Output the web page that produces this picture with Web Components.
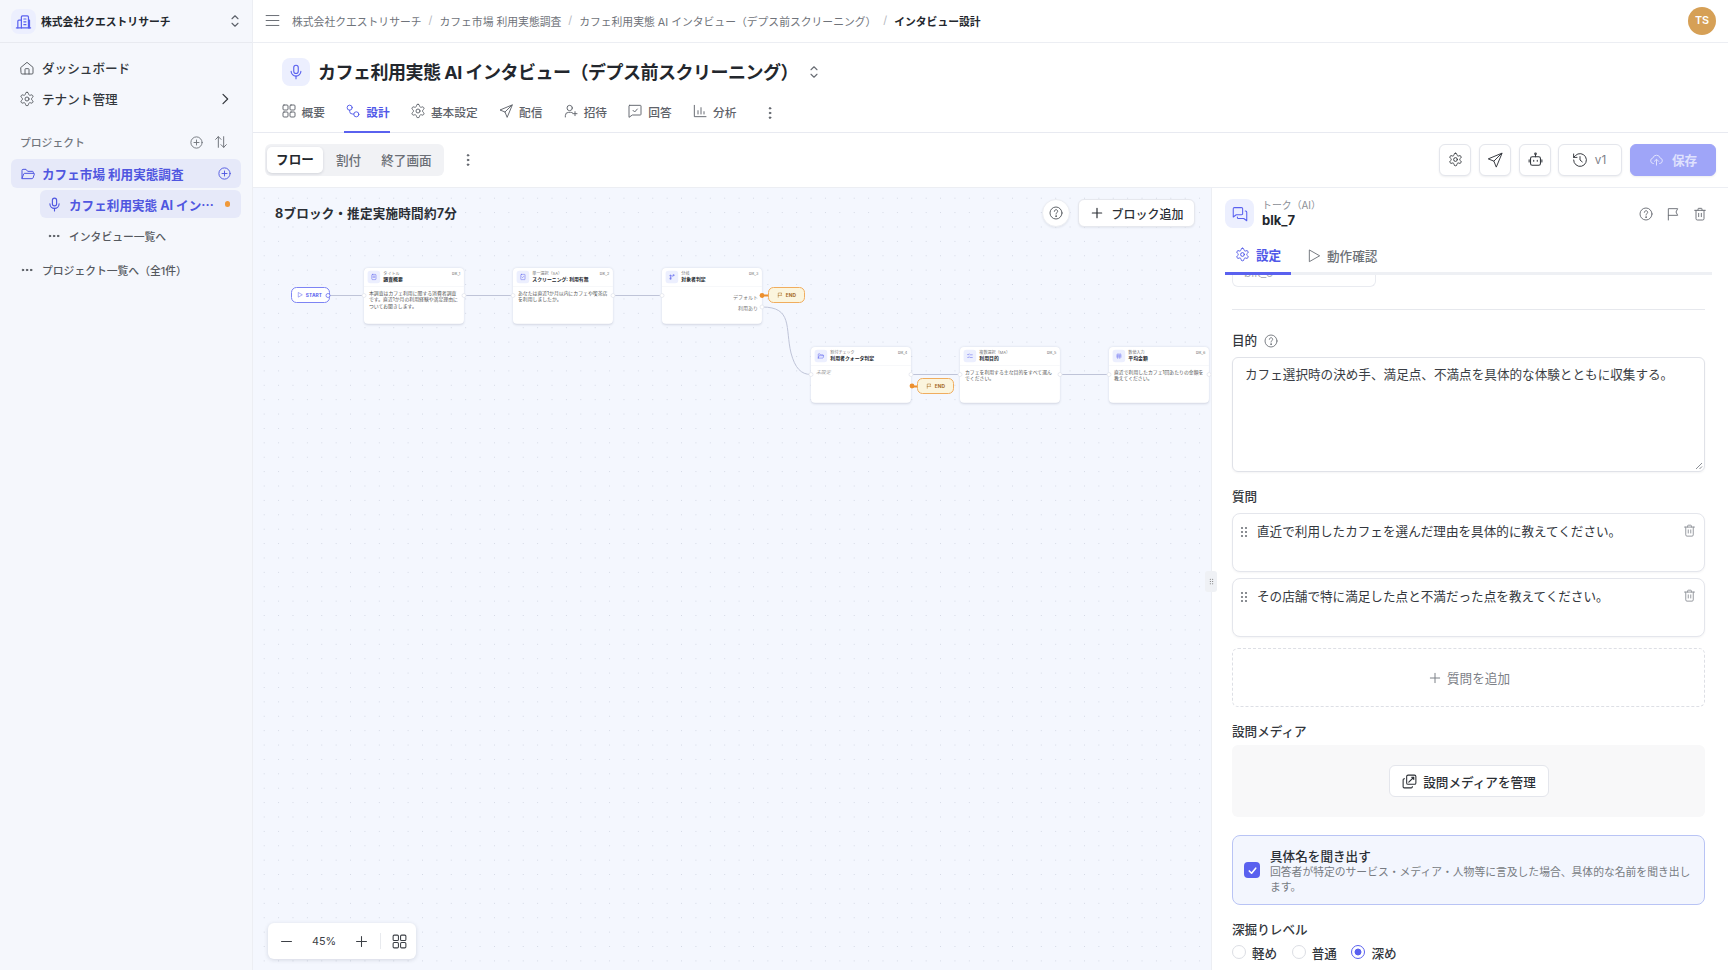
<!DOCTYPE html>
<html lang="ja">
<head>
<meta charset="utf-8">
<title>インタビュー設計</title>
<style>
  html, body { margin: 0; height: 100%; }
  body {
    font-family: Inter, "Noto Sans CJK JP", sans-serif;
    color: #1f2329;
    overflow: hidden;
    background: #fff;
  }
</style>
</head>
<body>
<app-root></app-root>
<script>
const ICONS = {
  home: '<path d="M3 11 12 3.500 21 11v8.500a1.500 1.500 0 0 1-1.500 1.500h-15A1.500 1.500 0 0 1 3 19.500z"/><path d="M9 21v-7a1 1 0 0 1 1-1h4a1 1 0 0 1 1 1v7"/>',
  gear: '<path d="M12.22 2h-.44a2 2 0 0 0-2 2v.18a2 2 0 0 1-1 1.73l-.43.25a2 2 0 0 1-2 0l-.15-.08a2 2 0 0 0-2.73.73l-.22.38a2 2 0 0 0 .73 2.73l.15.1a2 2 0 0 1 1 1.72v.51a2 2 0 0 1-1 1.74l-.15.09a2 2 0 0 0-.73 2.73l.22.38a2 2 0 0 0 2.73.73l.15-.08a2 2 0 0 1 2 0l.43.25a2 2 0 0 1 1 1.73V20a2 2 0 0 0 2 2h.44a2 2 0 0 0 2-2v-.18a2 2 0 0 1 1-1.73l.43-.25a2 2 0 0 1 2 0l.15.08a2 2 0 0 0 2.73-.73l.22-.39a2 2 0 0 0-.73-2.73l-.15-.08a2 2 0 0 1-1-1.74v-.5a2 2 0 0 1 1-1.74l.15-.09a2 2 0 0 0 .73-2.73l-.22-.38a2 2 0 0 0-2.73-.73l-.15.08a2 2 0 0 1-2 0l-.43-.25a2 2 0 0 1-1-1.73V4a2 2 0 0 0-2-2z"/><circle cx="12" cy="12" r="3"/>',
  mic: '<rect x="9" y="3" width="6" height="11" rx="3"/><path d="M5.500 11a6.500 6.500 0 0 0 13 0"/><path d="M12 17.500V21"/>',
  building: '<path d="M9 21V5.500A1.500 1.500 0 0 1 10.500 4h7A1.500 1.500 0 0 1 19 5.500V21"/><path d="M9 10H5.500A1.500 1.500 0 0 0 4 11.500V21"/><path d="M19 10h1.500v11"/><path d="M2 21h20"/><path d="M12.500 8.500h3M12.500 12.500h3M12.500 16.500h3"/>',
  updown: '<path d="m8 9 4-4 4 4"/><path d="m8 15 4 4 4-4"/>',
  right: '<path d="m9 5 7 7-7 7"/>',
  menu: '<path d="M3 5h18M3 12h18M3 19h18"/>',
  pluscircle: '<circle cx="12" cy="12" r="9"/><path d="M12 8v8M8 12h8"/>',
  sort: '<path d="M8 20V4M4 8l4-4 4 4"/><path d="M16 4v16M12 16l4 4 4-4"/>',
  folder: '<path d="M3 18V6.500A1.500 1.500 0 0 1 4.500 5H9l2.500 3h7A1.500 1.500 0 0 1 20 9.500V11"/><path d="M3 18.500 5.500 12a1.500 1.500 0 0 1 1.400-1H20.500a1 1 0 0 1 1 1.300L19.500 18a1.500 1.500 0 0 1-1.400 1H3.500z"/>',
  dots: '<circle cx="5" cy="12" r="1.300" fill="currentColor"/><circle cx="12" cy="12" r="1.300" fill="currentColor"/><circle cx="19" cy="12" r="1.300" fill="currentColor"/>',
  kebab: '<circle cx="12" cy="5" r="1.200" fill="currentColor"/><circle cx="12" cy="12" r="1.200" fill="currentColor"/><circle cx="12" cy="19" r="1.200" fill="currentColor"/>',
  grid: '<rect x="3" y="3" width="7.500" height="7.500" rx="1.500"/><rect x="13.500" y="3" width="7.500" height="7.500" rx="1.500"/><rect x="3" y="13.500" width="7.500" height="7.500" rx="1.500"/><rect x="13.500" y="13.500" width="7.500" height="7.500" rx="1.500"/>',
  route: '<circle cx="7" cy="7" r="3.800"/><circle cx="17" cy="17" r="3.800"/><path d="M7 10.800v1.700a4 4 0 0 0 4 4h2.200"/>',
  send: '<path d="M21 3 3 10.500l7.500 3 3 7.500z"/><path d="m21 3-10.500 10.500"/>',
  userplus: '<circle cx="10" cy="7.500" r="4"/><path d="M3.500 21v-2a5 5 0 0 1 5-5h3a5 5 0 0 1 3 1"/><path d="M18 13v6M15 16h6"/>',
  msgcheck: '<path d="M4 3.500h16a1 1 0 0 1 1 1v12.500a1 1 0 0 1-1 1H8l-5 3.500V4.500a1 1 0 0 1 1-1z"/><path d="m9 11 2.500 2.500L15.500 9"/>',
  chart: '<path d="M3.500 3.500V20.500H21"/><path d="M9 16.500v-5M13.500 16.500V7M18 16.500v-3.500"/>',
  robot: '<rect x="5" y="8" width="14" height="12" rx="2.500"/><path d="M12 8V5"/><circle cx="12" cy="3.800" r="1.100"/><path d="M9.500 13v1.500M14.500 13v1.500"/><path d="M3 12.500v3M21 12.500v3"/>',
  history: '<path d="M3.500 12a8.500 8.500 0 1 0 2.500-6L3.500 8.500"/><path d="M3.500 4v4.500H8"/><path d="M12 7.500V12l3 2.500"/>',
  cloud: '<path d="M7 18.500a4.500 4.500 0 0 1-.8-8.900 6 6 0 0 1 11.600 0 4.500 4.500 0 0 1-.8 8.900"/><path d="M12 21v-9M8.500 15l3.500-3.500 3.500 3.500"/>',
  help: '<circle cx="12" cy="12" r="9"/><path d="M9.500 9.500a2.500 2.500 0 1 1 3.800 2.100c-.8.500-1.300 1-1.300 2"/><circle cx="12" cy="16.700" r=".6" fill="currentColor"/>',
  plus: '<path d="M12 5v14M5 12h14"/>',
  minus: '<path d="M5 12h14"/>',
  chat: '<path d="M3 5a1.500 1.500 0 0 1 1.500-1.500H14A1.500 1.500 0 0 1 15.500 5v6.500A1.500 1.500 0 0 1 14 13H7l-4 3z"/><path d="M19 8h.500A1.500 1.500 0 0 1 21 9.500V21l-4-3h-7a1.500 1.500 0 0 1-1.500-1.500V16"/>',
  flag: '<path d="M5 21V4h14l-2.500 5L19 14H5"/>',
  trash: '<path d="M4 6.500h16"/><path d="M9 6.500V4.500a1 1 0 0 1 1-1h4a1 1 0 0 1 1 1v2"/><path d="M6 6.500V19a2 2 0 0 0 2 2h8a2 2 0 0 0 2-2V6.500"/><path d="M10 11v5M14 11v5"/>',
  play: '<path d="M5 3.500v17l15-8.500z"/>',
  drag: '<circle cx="9" cy="6" r="1.600" fill="currentColor"/><circle cx="15" cy="6" r="1.600" fill="currentColor"/><circle cx="9" cy="12" r="1.600" fill="currentColor"/><circle cx="15" cy="12" r="1.600" fill="currentColor"/><circle cx="9" cy="18" r="1.600" fill="currentColor"/><circle cx="15" cy="18" r="1.600" fill="currentColor"/>',
  media: '<rect x="8" y="3" width="13" height="13" rx="2"/><path d="M5 8H4.500A1.500 1.500 0 0 0 3 9.500v10A1.500 1.500 0 0 0 4.500 21h10a1.500 1.500 0 0 0 1.500-1.500V19"/><path d="m11 13 7-7M15 6h3v3"/>',
  doc: '<rect x="5" y="3" width="14" height="18" rx="3"/><path d="M9 9h6M9 13h6"/>',
  check: '<rect x="5" y="3" width="14" height="18" rx="2"/><path d="m9 12 2 2 4-4"/>',
  branch: '<circle cx="7" cy="18" r="2"/><circle cx="7" cy="7" r="2"/><circle cx="17" cy="6" r="2"/><path d="M7 9v7M7 15c0-4 8-3 9-7"/>',
  list: '<path d="m4 7 2 2 3-4M4 16l2 2 3-4"/><path d="M12 8h8M12 17h8"/>',
  hash: '<path d="M9 4 8 20M16 4l-1 16M4 9h16M4 15h16"/>'
};

class UiIcon extends HTMLElement {
  connectedCallback() {
    const size = this.getAttribute('size') || 14;
    const sw = this.getAttribute('sw') || 1.7;
    this.attachShadow({ mode: 'open' }).innerHTML = `
      <style>
        :host { display: inline-flex; flex: none; width: ${size}px; height: ${size}px; }
        svg { width: 100%; height: 100%; display: block; }
      </style>
      <svg viewBox="0 0 24 24" fill="none" stroke="currentColor" stroke-width="${sw}" stroke-linecap="round" stroke-linejoin="round">${ICONS[this.getAttribute('name')] || ''}</svg>`;
  }
}
customElements.define('ui-icon', UiIcon);

// 四角い薄紫の背景つきアイコン
class IconTile extends HTMLElement {
  connectedCallback() {
    const size = +this.getAttribute('size') || 28;
    const icon = this.getAttribute('icon');
    const isize = this.getAttribute('isize') || 16;
    this.attachShadow({ mode: 'open' }).innerHTML = `
      <style>
        :host {
          display: inline-flex; flex: none; align-items: center; justify-content: center;
          width: ${size}px; height: ${size}px; border-radius: ${this.getAttribute('radius') || 8}px;
          background: #eceffe; color: #5a61ef;
        }
      </style>
      <ui-icon name="${icon}" size="${isize}" sw="${this.getAttribute('sw') || 1.7}"></ui-icon>`;
  }
}
customElements.define('icon-tile', IconTile);

class AppSidebar extends HTMLElement {
  connectedCallback() {
    this.attachShadow({ mode: 'open' }).innerHTML = `
      <style>
        :host {
          display: flex; flex-direction: column; flex: none; box-sizing: border-box;
          width: 253px; height: 970px; background: #f5f7fc; border-right: 1px solid #eceef3;
          font-size: 12.600px; color: #33373d;
        }
        .brand {
          display: flex; align-items: center; gap: 5px; height: 43px; box-sizing: border-box; padding: 0 8px 0 11px;
          border-bottom: 1px solid #e8eaf0; font-size: 10.800px; font-weight: 700; color: #23272d;
        }
        .brand span { flex: 1; }
        .brand .ud { color: #5d626b; }
        nav { padding: 9px 11px 0 19px; }
        .row { display: flex; align-items: center; gap: 7px; height: 31px; font-weight: 500; }
        .row span { flex: 1; }
        .row ui-icon { color: #55595f; }
        .label {
          display: flex; align-items: center; margin-top: 14px; padding: 0 23px 0 20px; height: 28px;
          font-size: 10.800px; font-weight: 500; color: #72767d; gap: 9.500px;
        }
        .label span { flex: 1; }
        .tree { padding: 3px 11px 0; }
        .project {
          display: flex; align-items: center; gap: 6px; height: 29px; padding: 0 9px;
          background: #e6e9f9; border-radius: 6px; color: #4f56e0; font-weight: 700;
        }
        .project span { flex: 1; }
        .child {
          display: flex; align-items: center; gap: 6.500px; height: 28px; margin: 2px 0 0 29px; padding: 0 11px 0 5.500px;
          background: #e6e9f9; border-radius: 6px; color: #4f56e0; font-weight: 700;
        }
        .child span { flex: 1; white-space: nowrap; }
        .child i { width: 5.500px; height: 5.500px; border-radius: 50%; background: #f0993a; }
        .more { display: flex; align-items: center; gap: 8px; color: #55595f; font-size: 10.800px; font-weight: 500; }
        .m1 { height: 28px; margin: 4px 0 0 47px; }
        .m2 { height: 28px; margin: 6px 0 0 20px; }
      </style>
      <div class="brand">
        <icon-tile size="25" icon="building" isize="17"></icon-tile>
        <span>株式会社クエストリサーチ</span>
        <ui-icon class="ud" name="updown" size="18" sw="1.500"></ui-icon>
      </div>
      <nav>
        <div class="row"><ui-icon name="home" size="16" sw="1.400"></ui-icon><span>ダッシュボード</span></div>
        <div class="row"><ui-icon name="gear" size="16" sw="1.400"></ui-icon><span>テナント管理</span><ui-icon name="right" size="16" style="color:#33373d;margin-right:8px" sw="1.800"></ui-icon></div>
      </nav>
      <div class="label"><span>プロジェクト</span><ui-icon name="pluscircle" size="15" sw="1.500"></ui-icon><ui-icon name="sort" size="16" sw="1.500"></ui-icon></div>
      <div class="tree">
        <div class="project"><ui-icon name="folder" size="16" sw="1.500"></ui-icon><span>カフェ市場 利用実態調査</span><ui-icon name="pluscircle" size="15" sw="1.500"></ui-icon></div>
        <div class="child"><ui-icon name="mic" size="17" sw="1.600"></ui-icon><span>カフェ利用実態 AI イン⋯</span><i></i></div>
      </div>
      <div class="more m1"><ui-icon name="dots" size="14"></ui-icon>インタビュー一覧へ</div>
      <div class="more m2"><ui-icon name="dots" size="14"></ui-icon>プロジェクト一覧へ（全1件）</div>`;
  }
}
customElements.define('app-sidebar', AppSidebar);

class TopBar extends HTMLElement {
  connectedCallback() {
    const crumbs = ['株式会社クエストリサーチ', 'カフェ市場 利用実態調査', 'カフェ利用実態 AI インタビュー（デプス前スクリーニング）'];
    this.attachShadow({ mode: 'open' }).innerHTML = `
      <style>
        :host {
          display: flex; align-items: center; box-sizing: border-box; height: 43px;
          padding: 0 12px 1px 11px; border-bottom: 1px solid #eceef3; font-size: 10.800px; color: #6f737a;
        }
        ui-icon { margin-right: 11px; color: #6a6e75; }
        .sep { margin: 0 7px; color: #b5b8be; }
        b { font-weight: 700; color: #23272d; }
        .gap { flex: 1; }
        .avatar {
          width: 28px; height: 28px; border-radius: 50%; background: #d6a056; color: #fff;
          display: flex; align-items: center; justify-content: center; font-size: 10.800px; font-weight: 600;
        }
      </style>
      <ui-icon name="menu" size="17" sw="1.400"></ui-icon>
      ${crumbs.map(c => `<span>${c}</span><span class="sep">/</span>`).join('')}
      <b>インタビュー設計</b>
      <span class="gap"></span>
      <div class="avatar">TS</div>`;
  }
}
customElements.define('top-bar', TopBar);

class PageHead extends HTMLElement {
  connectedCallback() {
    const tabs = [
      ['grid', '概要'], ['route', '設計', 1], ['gear', '基本設定'], ['send', '配信'],
      ['userplus', '招待'], ['msgcheck', '回答'], ['chart', '分析']
    ];
    this.attachShadow({ mode: 'open' }).innerHTML = `
      <style>
        :host {
          display: block; box-sizing: border-box; height: 90px; padding: 15px 0 0 27.500px;
          border-bottom: 1px solid #e8eaf1;
        }
        .title { display: flex; align-items: center; height: 28px; gap: 8px; margin-left: 1.500px; }
        h1 { margin: 0; padding-top: 1px; font-size: 18px; line-height: 28px; font-weight: 700; letter-spacing: -.5px; color: #23272d; }
        .ud { margin-left: -1px; color: #6a6e75; }
        .tabs { display: flex; align-items: stretch; gap: 20.300px; height: 33px; margin-top: 11px; font-size: 11.700px; color: #5e6269; font-weight: 500; }
        .tab { display: flex; align-items: center; gap: 5px; height: 36px; box-sizing: border-box; padding-bottom: 6px; border-bottom: 2px solid transparent; }
        .tab.on { color: #5058e8; border-bottom-color: #5a61ef; font-weight: 700; margin-left: -1.500px; padding-left: 1.500px; }
        .kebab { align-self: center; margin: -1px 0 0 5px; }
      </style>
      <div class="title">
        <icon-tile size="28" icon="mic" isize="18" sw="1.500"></icon-tile>
        <h1>カフェ利用実態 AI インタビュー（デプス前スクリーニング）</h1>
        <ui-icon class="ud" name="updown" size="18" sw="1.500"></ui-icon>
      </div>
      <div class="tabs">
        ${tabs.map(t => `<div class="tab ${t[2] ? 'on' : ''}"><ui-icon name="${t[0]}" size="16" sw="1.400"></ui-icon>${t[1]}</div>`).join('')}
        <ui-icon class="kebab" name="kebab" size="16" sw="1.400"></ui-icon>
      </div>`;
  }
}
customElements.define('page-head', PageHead);

class ToolBar extends HTMLElement {
  connectedCallback() {
    this.attachShadow({ mode: 'open' }).innerHTML = `
      <style>
        :host {
          display: flex; align-items: center; box-sizing: border-box; height: 55px; padding: 0 12px 1px 12px;
          border-bottom: 1px solid #eceef3; font-size: 12.600px;
        }
        .seg { display: flex; align-items: center; height: 32px; padding: 0 2px; background: #f1f2f5; border-radius: 6px; color: #6b6f76; font-weight: 500; width: 179px; box-sizing: border-box; }
        .seg div { padding: 0 10px; }
        .seg .on { width: 56px; height: 26px; line-height: 26px; padding: 0; text-align: center; margin-right: 3px; background: #fff; border-radius: 5px; color: #23272d; font-weight: 700; box-shadow: 0 1px 3px rgba(30,35,60,.15); }
        .k { margin-left: 16px; color: #5e6269; }
        .gap { flex: 1; }
        .btn {
          display: flex; align-items: center; justify-content: center; gap: 8px; box-sizing: border-box;
          width: 32px; height: 32px; margin-left: 8px; background: #fff; border: 1px solid #e4e6ec; border-radius: 6px;
          color: #33373d; box-shadow: 0 1px 2px rgba(30,35,60,.08);
        }
        .v { width: 64px; margin-left: 7px; gap: 6px; color: #7c8088; font-size: 11.700px; padding-right: 3px; }
        .v ui-icon { color: #33373d; }
        .save { width: 86px; background: #9fa5f8; border-color: #9fa5f8; color: #dfe1fd; font-weight: 600; font-size: 12.600px; }
      </style>
      <div class="seg"><div class="on">フロー</div><div>割付</div><div>終了画面</div></div>
      <ui-icon class="k" name="kebab" size="16" sw="1.400"></ui-icon>
      <span class="gap"></span>
      <div class="btn"><ui-icon name="gear" size="15" sw="1.500"></ui-icon></div>
      <div class="btn"><ui-icon name="send" size="18" sw="1.300"></ui-icon></div>
      <div class="btn"><ui-icon name="robot" size="17" sw="1.500"></ui-icon></div>
      <div class="btn v"><ui-icon name="history" size="18" sw="1.300"></ui-icon>v1</div>
      <div class="btn save"><ui-icon name="cloud" size="15" sw="1.600"></ui-icon>保存</div>`;
  }
}
customElements.define('tool-bar', ToolBar);

// キャンバス上のブロック。x, y はキャンバス内の位置、中身は 45% 表示
class FlowNode extends HTMLElement {
  connectedCallback() {
    const a = n => this.getAttribute(n) || '';
    this.attachShadow({ mode: 'open' }).innerHTML = `
      <style>
        :host { position: absolute; left: ${a('x')}px; top: ${a('y')}px; width: 100px; height: 56px; }
        .box {
          width: 222px; height: 124px; box-sizing: border-box; transform: scale(.45); transform-origin: 0 0;
          background: #fff; border-radius: 9px; box-shadow: 0 1px 5px rgba(40,50,90,.16); color: #333;
        }
        .head { display: flex; gap: 7px; align-items: center; height: 41px; box-sizing: border-box; padding: 0 8px; border-bottom: 1px solid #eef0f4; position: relative; }
        .kind { font-size: 9px; color: #777; line-height: 12px; }
        .name { font-size: 10.800px; font-weight: 700; color: #23272d; line-height: 14px; white-space: nowrap; }
        .id { position: absolute; right: 8px; top: 7px; font-size: 8.500px; color: #777; }
        .body { padding: 8px 11px; font-size: 10.800px; line-height: 14.800px; color: #555; }
        ::slotted(*) { display: block; }
      </style>
      <div class="box">
        <div class="head">
          <icon-tile size="28" radius="6" icon="${a('icon')}" isize="16"></icon-tile>
          <div><div class="kind">${a('kind')}</div><div class="name">${a('name')}</div></div>
          <div class="id">${a('bid')}</div>
        </div>
        <div class="body"><slot></slot></div>
      </div>`;
  }
}
customElements.define('flow-node', FlowNode);

class FlowTag extends HTMLElement {
  connectedCallback() {
    const a = n => this.getAttribute(n) || '';
    const start = a('kind') === 'start';
    this.attachShadow({ mode: 'open' }).innerHTML = `
      <style>
        :host {
          position: absolute; left: ${a('x')}px; top: ${a('y')}px; width: ${start ? 39 : 37}px; height: 16px; box-sizing: border-box;
          display: flex; align-items: center; justify-content: center; gap: 3px; padding-right: ${start ? 2 : 0}px;
          border-radius: 5.500px; font-size: 4.800px; font-weight: 700; letter-spacing: .1px;
          border: 1.200px solid ${start ? '#7d84f4' : '#f0ad5e'};
          background: ${start ? '#fff' : '#fbf5de'}; color: ${start ? '#5a61ef' : '#a66a1f'};
        }
      </style>
      <ui-icon name="${start ? 'play' : 'flag'}" size="6" sw="2"></ui-icon>${start ? 'START' : 'END'}`;
  }
}
customElements.define('flow-tag', FlowTag);

class ZoomBar extends HTMLElement {
  connectedCallback() {
    this.attachShadow({ mode: 'open' }).innerHTML = `
      <style>
        :host {
          position: absolute; left: 14.500px; bottom: 11px; display: flex; align-items: center; box-sizing: border-box;
          width: 148px; height: 36px; padding-left: 10px; background: #fff; border-radius: 6px;
          box-shadow: 0 1px 4px rgba(30,35,60,.15); font-size: 10.800px; color: #3c4046;
        }
        span { width: 36px; margin: 0 11px 0 11.500px; text-align: center; }
        i { width: 1px; height: 16px; margin: 0 10px; background: #e8eaee; }
      </style>
      <ui-icon name="minus" size="17" sw="1.500"></ui-icon><span>45%</span>
      <ui-icon name="plus" size="17" sw="1.500"></ui-icon><i></i>
      <ui-icon name="grid" size="17" sw="1.500"></ui-icon>`;
  }
}
customElements.define('zoom-bar', ZoomBar);

class FlowCanvas extends HTMLElement {
  connectedCallback() {
    // 線とハンドルの座標はキャンバス原点 (253, 188) 基準
    const pts = [[75,107.500],[111,107.500],[211,107.500],[260,107.500],[360,107.500],[409,107.500],[509,119],[558,186.500],[658,186.500],[707,186.500],[807,186.500],[856,186.500],[956,186.500]];
    this.attachShadow({ mode: 'open' }).innerHTML = `
      <style>
        :host {
          display: block; position: relative; flex: 1; overflow: hidden; min-width: 0;
          background-color: #f4f7fe;
          background-image: radial-gradient(circle, #d3d8e4 .7px, transparent .9px);
          background-size: 14.400px 14.400px; background-position: 4px 3px;
        }
        .head { display: flex; align-items: center; height: 28px; padding: 11px 16px 0 22px; font-size: 12.600px; font-weight: 700; letter-spacing: .2px; color: #2b2f35; }
        .head span { flex: 1; margin-top: -2px; }
        .q { width: 28px; height: 28px; border-radius: 50%; background: #fff; border: 1px solid #eceef3; box-sizing: border-box; display: flex; align-items: center; justify-content: center; color: #55595f; margin-right: 8px; box-shadow: 0 1px 2px rgba(30,35,60,.08); }
        .add { display: flex; align-items: center; justify-content: center; gap: 6px; width: 117px; height: 28px; box-sizing: border-box; background: #fff; border: 1px solid #e6e8ee; border-radius: 6px; font-size: 12px; font-weight: 500; letter-spacing: 0; color: #2b2f35; box-shadow: 0 1px 2px rgba(30,35,60,.08); }
        svg.edges { position: absolute; left: 0; top: 0; width: 960px; height: 300px; overflow: visible; }
        .rows { position: absolute; font-size: 5px; color: #777; text-align: right; width: 60px; }
      </style>
      <div class="head">
        <span>8ブロック・推定実施時間約7分</span>
        <div class="q"><ui-icon name="help" size="16" sw="1.400"></ui-icon></div>
        <div class="add"><ui-icon name="plus" size="16" sw="1.800"></ui-icon>ブロック追加</div>
      </div>
      <svg class="edges" viewBox="0 0 960 300" fill="none">
        <g stroke="#bfc4d8" stroke-width="1">
          <path d="M76 107.500H111M211 107.500H260M360 107.500H409M658 186.500H707M807 186.500H856"/>
          <path d="M509 119C540 119 532 140 538 165C542 180 548 186.500 558 186.500"/>
        </g>
      </svg>
      <flow-tag kind="start" x="38" y="99"></flow-tag>
      <flow-node x="111" y="80" icon="doc" kind="タイトル" name="調査概要" bid="blk_1">本調査はカフェ利用に関する消費者調査です。直近1か月の利用経験や満足理由についてお聞きします。</flow-node>
      <flow-node x="260" y="80" icon="check" kind="単一選択（SA）" name="スクリーニング: 利用有無" bid="blk_2">あなたは直近1か月以内にカフェや喫茶店を利用しましたか。</flow-node>
      <flow-node x="409" y="80" icon="branch" kind="分岐" name="対象者判定" bid="blk_3"></flow-node>
      <div class="rows" style="left:445px;top:104.500px">デフォルト</div>
      <div class="rows" style="left:445px;top:116px">利用あり</div>
      <flow-tag kind="end" x="515" y="99"></flow-tag>
      <flow-node x="558" y="159" icon="folder" kind="割付チェック" name="利用者クォータ判定" bid="blk_4"><span style="font-style:italic;color:#999">未設定</span></flow-node>
      <flow-tag kind="end" x="664" y="190"></flow-tag>
      <flow-node x="707" y="159" icon="list" kind="複数選択（MA）" name="利用目的" bid="blk_5">カフェを利用する主な目的をすべて選んでください。</flow-node>
      <flow-node x="856" y="159" icon="hash" kind="数値入力" name="平均金額" bid="blk_6">直近で利用したカフェ1回あたりの金額を教えてください。</flow-node>
      <svg class="edges" viewBox="0 0 960 300" fill="none">
        ${pts.map(p => `<circle cx="${p[0]}" cy="${p[1]}" r="2" fill="#fff" stroke="${p[0] === 75 ? '#6a70f0' : '#e3e6ee'}" stroke-width=".8"/>`).join('')}
        <path d="M509 107.500h6M658 198.500h6" stroke="#ec8f2e" stroke-width="2"/>
        <circle cx="509" cy="107.500" r="2.400" fill="#ec8f2e"/>
        <circle cx="659" cy="198" r="2.400" fill="#ec8f2e"/>
      </svg>
      <zoom-bar></zoom-bar>`;
  }
}
customElements.define('flow-canvas', FlowCanvas);

class QuestionItem extends HTMLElement {
  connectedCallback() {
    this.attachShadow({ mode: 'open' }).innerHTML = `
      <style>
        :host {
          display: flex; box-sizing: border-box; height: 59px; padding: 8px 7px 0 3px; gap: 5px;
          background: #fff; border: 1px solid #e4e6ec; border-radius: 8px; font-size: 12.600px; line-height: 20px; color: #33373d;
          box-shadow: 0 1px 2px rgba(30,35,60,.05);
        }
        .t { flex: 1; }
        .d { color: #6e7278; margin-top: 2px; }
        .x { color: #8a8e95; margin-top: 1px; }
      </style>
      <ui-icon class="d" name="drag" size="16" sw="0"></ui-icon>
      <div class="t"><slot></slot></div>
      <ui-icon class="x" name="trash" size="15" sw="1.400"></ui-icon>`;
  }
}
customElements.define('question-item', QuestionItem);

class BlockPanel extends HTMLElement {
  connectedCallback() {
    this.attachShadow({ mode: 'open' }).innerHTML = `
      <style>
        :host {
          display: flex; flex-direction: column; flex: none; position: relative; box-sizing: border-box;
          width: 517px; height: 782px; background: #fff; border-left: 1px solid #eceef3; color: #2b2f35;
        }
        .top { display: flex; align-items: center; gap: 8px; height: 51px; padding: 0 20px 0 13px; box-sizing: border-box; }
        .top .who { flex: 1; }
        .kind { font-size: 9.900px; line-height: 13px; color: #8a8e95; }
        .bid { font-size: 13px; line-height: 16px; font-weight: 700; color: #23272d; }
        .top ui-icon { color: #696d74; margin-left: 3px; }
        .tabs { display: flex; height: 36px; margin: 0 16px 0 13px; box-sizing: border-box; border-bottom: 3px solid #eef0f4; font-size: 12.600px; font-weight: 500; color: #6e7278; }
        .tab { display: flex; align-items: center; gap: 5px; height: 36px; box-sizing: border-box; padding-bottom: 3px; }
        .tab.on { width: 66px; gap: 6px; justify-content: center; color: #5058e8; font-weight: 700; border-bottom: 3px solid #5a61ef; margin-right: 15px; }
        .scroll { flex: 1; overflow: hidden; padding: 0 23px 0 20px; }
        .stub { width: 144px; height: 12px; box-sizing: border-box; border: 1px solid #e9ebf0; border-top: 0; border-radius: 0 0 6px 6px; overflow: hidden; font-size: 12px; line-height: 12px; color: #b0b3ba; padding-left: 11px; }
        .stub span { display: block; margin-top: -8px; }
        hr { border: 0; border-top: 1px solid #e6e8ed; margin: 22px 0 0; }
        label { display: flex; align-items: center; gap: 6px; font-size: 12.600px; line-height: 16px; font-weight: 500; color: #33373d; }
        .area { position: relative; box-sizing: border-box; height: 115px; margin-top: 8px; padding: 7px 12px; border: 1px solid #e0e2e8; border-radius: 6px; font-size: 12.600px; line-height: 20px; color: #3a3e44; box-shadow: 0 1px 2px rgba(30,35,60,.05); }
        .grip { position: absolute; right: 1px; bottom: 1px; width: 8px; height: 8px; color: #8a8e95; }
        .qs { display: flex; flex-direction: column; gap: 6px; margin-top: 8px; }
        .addq { display: flex; align-items: center; justify-content: center; gap: 4px; height: 59px; margin-top: 11px; box-sizing: border-box; border: 1px dashed #dddfe5; border-radius: 6px; font-size: 12.600px; color: #7d8188; }
        .media { display: flex; align-items: center; justify-content: center; height: 72px; margin-top: 5px; background: #f8f8f9; border-radius: 6px; }
        .mbtn { display: flex; align-items: center; justify-content: center; gap: 5px; width: 160px; height: 32px; box-sizing: border-box; background: #fff; border: 1px solid #e4e6ec; border-radius: 6px; font-size: 12.600px; font-weight: 500; color: #2b2f35; }
        .opt { display: flex; align-items: center; gap: 10px; box-sizing: border-box; height: 70px; margin-top: 18px; padding: 0 12px 0 11px; background: #f3f6fe; border: 1px solid #b9c4f5; border-radius: 8px; }
        .cb { flex: none; display: flex; align-items: center; justify-content: center; width: 16px; height: 16px; background: #5a61ef; border-radius: 4px; color: #fff; }
        .txt { padding-top: 4px; }
        .opt b { display: block; font-size: 12.600px; line-height: 16px; font-weight: 500; color: #2b2f35; }
        .opt p { margin: 0; font-size: 10.800px; line-height: 15px; color: #777b82; }
        .radios { display: flex; align-items: center; font-size: 12.600px; font-weight: 500; color: #33373d; margin-top: 5px; height: 18px; }
        .r { width: 14px; height: 14px; box-sizing: border-box; border: 1px solid #dcdee4; border-radius: 50%; margin-right: 6px; background: #fff; }
        .r.on { border: 1px solid #5a61ef; background: radial-gradient(circle, #5a61ef 0 3.200px, #fff 3.700px); }
        .radios span { margin-right: 14.500px; }
      </style>
      <div class="top">
        <icon-tile size="29" icon="chat" isize="18" sw="1.400"></icon-tile>
        <div class="who"><div class="kind">トーク（AI）</div><div class="bid">blk_7</div></div>
        <ui-icon name="help" size="16" sw="1.400"></ui-icon>
        <ui-icon name="flag" size="16" sw="1.400"></ui-icon>
        <ui-icon name="trash" size="16" sw="1.400"></ui-icon>
      </div>
      <div class="tabs">
        <div class="tab on"><ui-icon name="gear" size="15" sw="1.600"></ui-icon>設定</div>
        <div class="tab"><ui-icon name="play" size="16" sw="1.400"></ui-icon>動作確認</div>
      </div>
      <div class="scroll">
        <div class="stub"><span>blk_6</span></div>
        <hr>
        <label style="margin-top:23px">目的 <ui-icon name="help" size="16" sw="1.300" style="color:#6a6e75"></ui-icon></label>
        <div class="area">カフェ選択時の決め手、満足点、不満点を具体的な体験とともに収集する。
          <svg class="grip" viewBox="0 0 8 8" fill="none" stroke="currentColor"><path d="M7 1 1 7M7 4.500 4.500 7"/></svg>
        </div>
        <label style="margin-top:17px">質問</label>
        <div class="qs">
          <question-item>直近で利用したカフェを選んだ理由を具体的に教えてください。</question-item>
          <question-item>その店舗で特に満足した点と不満だった点を教えてください。</question-item>
        </div>
        <div class="addq"><ui-icon name="plus" size="16" sw="1.500"></ui-icon>質問を追加</div>
        <label style="margin-top:17px">設問メディア</label>
        <div class="media"><div class="mbtn"><ui-icon name="media" size="17" sw="1.500"></ui-icon>設問メディアを管理</div></div>
        <div class="opt">
          <div class="cb"><svg width="11" height="11" viewBox="0 0 24 24" fill="none" stroke="currentColor" stroke-width="3.500" stroke-linecap="round" stroke-linejoin="round"><path d="m5 13 5 5 9-11"/></svg></div>
          <div class="txt"><b>具体名を聞き出す</b><p>回答者が特定のサービス・メディア・人物等に言及した場合、具体的な名前を聞き出します。</p></div>
        </div>
        <label style="margin-top:17px">深掘りレベル</label>
        <div class="radios"><i class="r"></i><span>軽め</span><i class="r"></i><span>普通</span><i class="r on"></i><span>深め</span></div>
      </div>`;
  }
}
customElements.define('block-panel', BlockPanel);

class AppRoot extends HTMLElement {
  connectedCallback() {
    this.attachShadow({ mode: 'open' }).innerHTML = `
      <style>
        :host { display: flex; width: 1728px; height: 970px; overflow: hidden; }
        main { flex: 1; min-width: 0; display: flex; flex-direction: column; }
        .work { flex: 1; display: flex; min-height: 0; position: relative; }
        .handle { position: absolute; left: 952px; top: 383px; width: 12px; height: 21px; border-radius: 3px; background: #eff1f5; color: #777; display: flex; align-items: center; justify-content: center; z-index: 2; }
      </style>
      <app-sidebar></app-sidebar>
      <main>
        <top-bar></top-bar>
        <page-head></page-head>
        <tool-bar></tool-bar>
        <div class="work">
          <flow-canvas></flow-canvas>
          <block-panel></block-panel>
          <div class="handle"><ui-icon name="drag" size="9" sw="0"></ui-icon></div>
        </div>
      </main>`;
  }
}
customElements.define('app-root', AppRoot);
</script>
</body>
</html>
